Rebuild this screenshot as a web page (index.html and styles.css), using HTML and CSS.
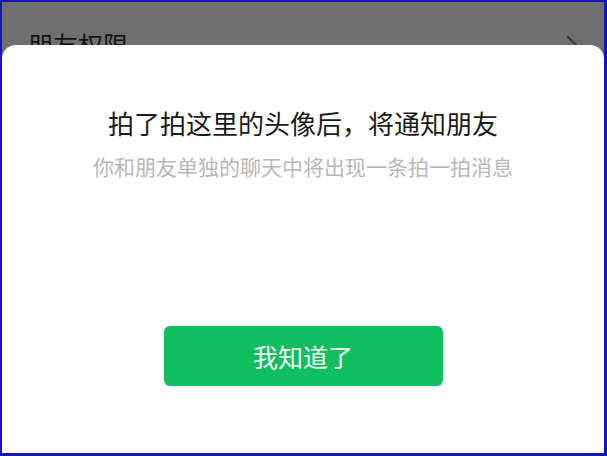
FILE: index.html
```html
<!DOCTYPE html>
<html lang="zh-CN">
<head>
  <meta charset="UTF-8">
  <meta name="viewport" content="width=device-width, initial-scale=1.0">
  <title>拍一拍</title>
  <link rel="stylesheet" href="styles.css">
</head>
<body>
  <div class="frame">
    <!-- 背后的设置页（被遮罩压暗） -->
    <div class="page-behind">
      <div class="row">
        <span class="row-title">朋友权限</span>
        <svg class="chevron" width="14" height="24" viewBox="0 0 14 24">
          <path d="M2 2 L12 12 L2 22" fill="none" stroke="#3a3a3a" stroke-width="2" stroke-linecap="round"/>
        </svg>
      </div>
    </div>

    <!-- 底部弹窗 -->
    <div class="sheet">
      <div class="sheet-title">拍了拍这里的头像后，将通知朋友</div>
      <div class="sheet-desc">你和朋友单独的聊天中将出现一条拍一拍消息</div>
      <button class="btn-ok">我知道了</button>
    </div>
  </div>
</body>
</html>
```

FILE: styles.css
```css
* { box-sizing: border-box; margin: 0; padding: 0; font-family: "Noto Sans CJK SC", "Noto Sans", sans-serif; }

body {
  background: #fff;
}

.frame {
  width: 607px;
  height: 456px;
  border-style: solid;
  border-color: #1616b8;
  border-width: 2px 3px 3px 2px;
  display: flex;
  flex-direction: column;
  background: #6f6f6f;
  overflow: hidden;
}

/* 遮罩下的页面 */
.page-behind {
  height: 43px;
  overflow: hidden;
  flex-shrink: 0;
}

.row {
  display: flex;
  justify-content: space-between;
  align-items: flex-start;
  padding: 25px 24px 0 26px;
}

.row-title {
  font-size: 25px;
  line-height: 35px;
  color: #141414;
}

.chevron {
  margin-top: 8px;
}

/* 弹窗 */
.sheet {
  flex: 1;
  background: #fff;
  border-radius: 14px 14px 0 0;
  display: flex;
  flex-direction: column;
  align-items: center;
  padding-top: 60px;
}

.sheet-title {
  font-size: 26px;
  line-height: 36px;
  color: #1a1a1a;
}

.sheet-desc {
  margin-top: 10px;
  font-size: 21px;
  line-height: 30px;
  color: #b8b8b8;
}

.btn-ok {
  margin-top: 145px;
  width: 279px;
  height: 60px;
  border: none;
  border-radius: 6px;
  background: #0fbf5f;
  color: #f4fff8;
  font-size: 25px;
  cursor: pointer;
}
```
